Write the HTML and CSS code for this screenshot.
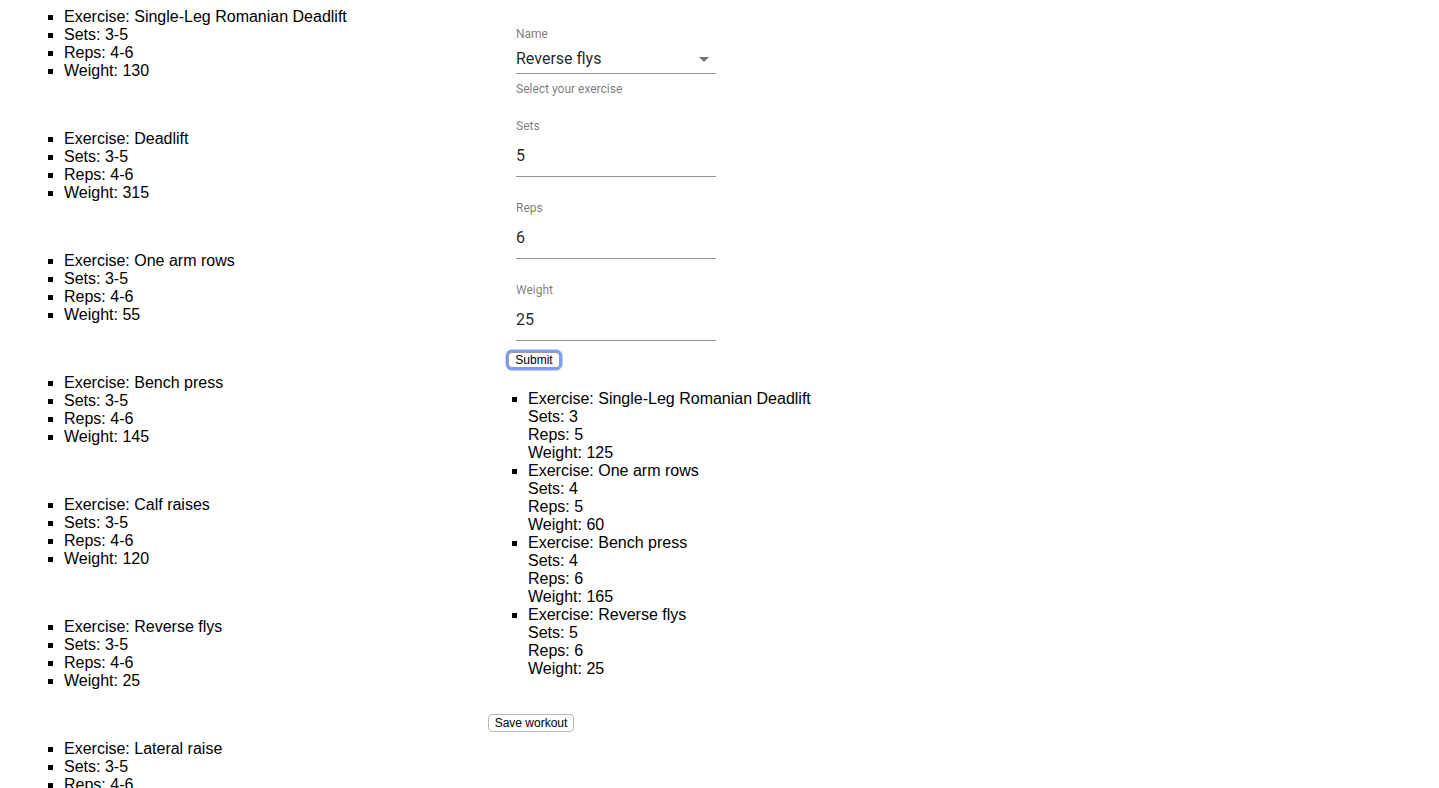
FILE: index.html
```html
<!DOCTYPE html>
<html>
<head>
<meta charset="utf-8">
<link rel="stylesheet" href="styles.css">
</head>
<body>
<div class="page">
  <div class="left">
    <ul class="plan"><li>Exercise: Single-Leg Romanian Deadlift</li><li>Sets: 3-5</li><li>Reps: 4-6</li><li>Weight: 130</li></ul>
    <ul class="plan"><li>Exercise: Deadlift</li><li>Sets: 3-5</li><li>Reps: 4-6</li><li>Weight: 315</li></ul>
    <ul class="plan"><li>Exercise: One arm rows</li><li>Sets: 3-5</li><li>Reps: 4-6</li><li>Weight: 55</li></ul>
    <ul class="plan"><li>Exercise: Bench press</li><li>Sets: 3-5</li><li>Reps: 4-6</li><li>Weight: 145</li></ul>
    <ul class="plan"><li>Exercise: Calf raises</li><li>Sets: 3-5</li><li>Reps: 4-6</li><li>Weight: 120</li></ul>
    <ul class="plan"><li>Exercise: Reverse flys</li><li>Sets: 3-5</li><li>Reps: 4-6</li><li>Weight: 25</li></ul>
    <ul class="plan"><li>Exercise: Lateral raise</li><li>Sets: 3-5</li><li>Reps: 4-6</li><li>Weight: 20</li></ul>
  </div>
  <div class="right">
    <form class="form">
      <div class="field">
        <div class="label">Name</div>
        <div class="control select">
          <span class="value">Reverse flys</span>
          <svg class="arrow" viewBox="0 0 24 24" width="24" height="24"><path d="M7 10l5 5 5-5z"/></svg>
        </div>
        <div class="helper">Select your exercise</div>
      </div>
      <div class="field spaced">
        <div class="label">Sets</div>
        <div class="control text"><span class="value">5</span></div>
      </div>
      <div class="field spaced">
        <div class="label">Reps</div>
        <div class="control text"><span class="value">6</span></div>
      </div>
      <div class="field spaced">
        <div class="label">Weight</div>
        <div class="control text"><span class="value">25</span></div>
      </div>
      <button type="button" class="btn submit">Submit</button>
    </form>
    <ul class="workout">
      <li>Exercise: Single-Leg Romanian Deadlift<br>Sets: 3<br>Reps: 5<br>Weight: 125</li>
      <li>Exercise: One arm rows<br>Sets: 4<br>Reps: 5<br>Weight: 60</li>
      <li>Exercise: Bench press<br>Sets: 4<br>Reps: 6<br>Weight: 165</li>
      <li>Exercise: Reverse flys<br>Sets: 5<br>Reps: 6<br>Weight: 25</li>
    </ul>
    <button type="button" class="btn save">Save workout</button>
  </div>
</div>
</body>
</html>
```

FILE: styles.css
```css
html, body {
  margin: 0;
  padding: 0;
  background: #fff;
}
body {
  padding: 8px;
  font-family: "Liberation Sans", Arial, sans-serif;
  font-size: 16px;
  line-height: 18px;
  color: #000;
  overflow: hidden;
  height: 772px;
}
.page {
  display: grid;
  grid-template-columns: 480px 1fr;
}
.left {
  padding-left: 16px;
}
.plan {
  list-style: square;
  margin: 0 0 50px 0;
  padding-left: 40px;
}
.right {
  display: flex;
  flex-direction: column;
  align-items: flex-start;
  padding-top: 20px;
}
.form {
  margin: 0 0 0 20px;
  display: flex;
  flex-direction: column;
  align-items: flex-start;
  font-family: Roboto, "Liberation Sans", sans-serif;
}
.field {
  margin-left: 8px;
  width: 200px;
}
.field.spaced {
  margin-top: 25px;
}
.label {
  font-size: 12px;
  line-height: 12px;
  color: rgba(0, 0, 0, 0.54);
}
.control {
  position: relative;
  border-bottom: 1px solid rgba(0, 0, 0, 0.42);
  font-size: 16px;
  line-height: 19px;
  color: rgba(0, 0, 0, 0.87);
}
.control.select {
  margin-top: 9px;
  padding-bottom: 5px;
}
.control.text {
  margin-top: 14px;
  padding-bottom: 11px;
}
.arrow {
  position: absolute;
  right: 0;
  top: -2px;
  fill: rgba(0, 0, 0, 0.54);
}
.helper {
  margin-top: 9px;
  font-size: 12px;
  line-height: 12px;
  color: rgba(0, 0, 0, 0.54);
}
.btn {
  font-family: "Liberation Sans", Arial, sans-serif;
  font-size: 12px;
  line-height: 14px;
  color: #000;
  background: #fff;
  border: 1px solid #b8b8b8;
  border-radius: 4px;
  padding: 0 7px;
  margin: 0;
}
.submit {
  margin-top: 11px;
  height: 16px;
  width: 52px;
  padding: 0;
  border-color: #9a9a9a;
  box-shadow: 0 0 0 2.5px #7d9ef4;
}
.workout {
  list-style: square;
  margin: 22px 0 0 0;
  padding-left: 40px;
}
.save {
  margin-top: 36px;
  height: 18px;
  width: 86px;
  padding: 0;
}
```
